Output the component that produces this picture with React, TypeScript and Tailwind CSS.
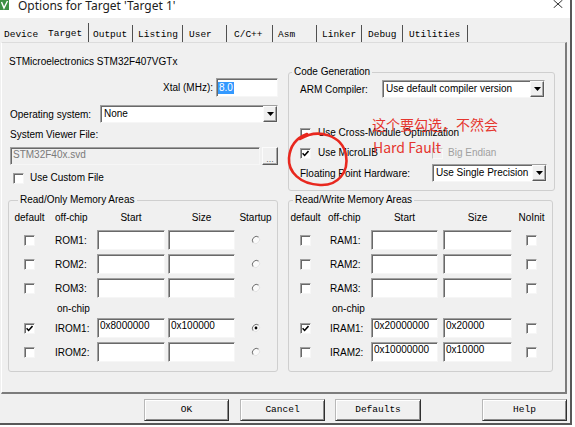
import React from "react";

const sunken =
  "border border-t-[#a0a0a0] border-l-[#a0a0a0] border-b-[#f6f6f6] border-r-[#f6f6f6] shadow-[inset_1px_1px_0_#696969]";
const raised =
  "border border-t-[#fbfbfb] border-l-[#fbfbfb] border-b-[#5a5a5a] border-r-[#5a5a5a] shadow-[inset_-1px_-1px_0_#a8a8a8]";
const btnRaised =
  "border border-t-[#b8b8b8] border-l-[#b8b8b8] border-b-[#303030] border-r-[#303030] shadow-[inset_1px_1px_0_#ffffff,inset_-1px_-1px_0_#8c8c8c]";

function Cb({ checked = false, disabled = false }: { checked?: boolean; disabled?: boolean }) {
  return (
    <span
      className={`w-[11px] h-[11px] shrink-0 flex items-center justify-center ${
        disabled
          ? "bg-[#f0f0f0] border border-t-[#c4c4c4] border-l-[#c4c4c4] border-b-[#f8f8f8] border-r-[#f8f8f8]"
          : "bg-white " + sunken
      }`}
    >
      {checked && (
        <svg width="7" height="7" viewBox="0 0 7 7">
          <path d="M0.6 3.3 L2.6 5.4 L6.5 1.1" fill="none" stroke="#000" strokeWidth="1.5" />
        </svg>
      )}
    </span>
  );
}

function Radio({ checked = false }: { checked?: boolean }) {
  return (
    <svg width="10" height="10" viewBox="0 0 10 10">
      <circle cx="5" cy="5" r="4" fill="#fafafa" />
      <path d="M7.8 2.2 A4 4 0 0 0 2.2 7.8" fill="none" stroke="#6e6e6e" strokeWidth="1" />
      <path d="M2.2 7.8 A4 4 0 0 0 7.8 2.2" fill="none" stroke="#e2e2e2" strokeWidth="1" />
      {checked && <circle cx="5" cy="5" r="1.4" fill="#000" />}
    </svg>
  );
}

function Select({ cls, text }: { cls: string; text: string }) {
  return (
    <div className={`${cls} h-[18px] flex bg-white ${sunken}`}>
      <span className="flex-1 pl-[3px] leading-[15px] whitespace-nowrap overflow-hidden">{text}</span>
      <span className={`w-[14px] h-full bg-[#f0f0f0] flex items-center justify-center ${raised}`}>
        <svg width="7" height="4" viewBox="0 0 7 4">
          <path d="M0 0 H7 L3.5 4 Z" fill="#000" />
        </svg>
      </span>
    </div>
  );
}

function Field({ cls, text }: { cls: string; text?: string }) {
  return (
    <div className={`${cls} h-[20px] bg-white ${sunken} pl-[2px] pt-[1px] leading-[12px] whitespace-nowrap`}>
      {text}
    </div>
  );
}

type Row = { label: string; start?: string; size?: string; def?: boolean; last?: boolean };

function MemArea(p: {
  title: string;
  boxCls: string;
  legendCls: string;
  c1: string;
  c2: string;
  c3: string;
  g: string;
  c4: string;
  c5: string;
  labPl: string;
  headPl: string;
  onPl: string;
  lastHead: string;
  radio: boolean;
  rows: Row[];
  onchip: Row[];
}) {
  const renderRow = (r: Row) => (
    <div key={r.label} className="h-[24px] flex items-center">
      <div className={`${p.c1} shrink-0 flex justify-center`}>
        <Cb checked={r.def} />
      </div>
      <div className={`${p.c2} shrink-0 ${p.labPl} whitespace-nowrap`}>{r.label}</div>
      <Field cls={`${p.c3} shrink-0`} text={r.start} />
      <div className={`${p.g} shrink-0`} />
      <Field cls={`${p.c4} shrink-0`} text={r.size} />
      <div className={`${p.c5} shrink-0 flex justify-center`}>
        {p.radio ? <Radio checked={r.last} /> : <Cb checked={r.last} />}
      </div>
    </div>
  );
  return (
    <fieldset className={`${p.boxCls} h-[178px] border border-[#cfcfcf] rounded-[3px]`}>
      <legend className={`${p.legendCls} px-[2px] leading-[12px]`}>{p.title}</legend>
      <div className="mt-[6px] h-[12px] flex leading-[12px] whitespace-nowrap">
        <div className={`${p.c1} shrink-0 text-center`}>default</div>
        <div className={`${p.c2} shrink-0 ${p.headPl}`}>off-chip</div>
        <div className={`${p.c3} shrink-0 text-center`}>Start</div>
        <div className={`${p.g} shrink-0`} />
        <div className={`${p.c4} shrink-0 text-center`}>Size</div>
        <div className={`${p.c5} shrink-0 text-center`}>{p.lastHead}</div>
      </div>
      <div className="mt-[4px] flex flex-col">
        {p.rows.map(renderRow)}
        <div className="h-[16px] flex items-center">
          <div className={`${p.c1} shrink-0`} />
          <div className={`${p.onPl} whitespace-nowrap`}>on-chip</div>
        </div>
        {p.onchip.map(renderRow)}
      </div>
    </fieldset>
  );
}

const tabs: { t: string; cls: string }[] = [
  { t: "Device", cls: "w-[43px] h-[17px] pl-[2px] pt-[4px]" },
  { t: "Target", cls: "w-[44px] h-[19px] pl-[3px] pt-[5px] border-r border-r-[#505050]" },
  { t: "Output", cls: "w-[44px] h-[17px] pl-[4px] pt-[4px] border-r border-r-[#505050]" },
  { t: "Listing", cls: "w-[50px] h-[17px] pl-[5px] pt-[4px] border-r border-r-[#505050]" },
  { t: "User", cls: "w-[44px] h-[17px] pl-[6px] pt-[4px] border-r border-r-[#505050]" },
  { t: "C/C++", cls: "w-[46px] h-[17px] pl-[7px] pt-[4px] border-r border-r-[#505050]" },
  { t: "Asm", cls: "w-[44px] h-[17px] pl-[5px] pt-[4px] border-r border-r-[#505050]" },
  { t: "Linker", cls: "w-[45px] h-[17px] pl-[5px] pt-[4px] border-r border-r-[#505050]" },
  { t: "Debug", cls: "w-[41px] h-[17px] pl-[6px] pt-[4px] border-r border-r-[#505050]" },
  { t: "Utilities", cls: "w-[65px] h-[17px] pl-[6px] pt-[4px] border-r border-r-[#505050]" },
];

export default function App() {
  return (
    <div className="relative w-[575px] h-[427px] bg-white overflow-hidden font-['Liberation_Sans',Arial,sans-serif] text-[10px] text-black">
      <div className="w-[572px] h-[425px] bg-[#f0f0f0] border-r-2 border-b-2 border-[#585858] flex flex-col">
        {/* title bar */}
        <div className="h-[18px] shrink-0 bg-white flex items-start">
          <svg width="9" height="10" viewBox="0 0 9 10" className="shrink-0">
            <rect x="0" y="0" width="9" height="10" fill="#3d8f43" />
            <path d="M1.5 2 L4 8 L7.5 1" fill="none" stroke="#ffffff" strokeWidth="1.4" />
          </svg>
          <span className="ml-[9px] mt-[0px] font-['Noto_Sans',sans-serif] text-[12px] leading-[12px] text-[#1c1c1c] whitespace-nowrap">
            Options for Target 'Target 1'
          </span>
          <svg width="10" height="8" viewBox="0 0 10 8" className="ml-auto mr-[7px] shrink-0">
            <path d="M0.5 0 L9.5 8 M9.5 0 L0.5 8" stroke="#333" strokeWidth="1" />
          </svg>
        </div>

        {/* tabs */}
        <div className="h-[24px] shrink-0 flex items-end pl-[2px] font-['Liberation_Mono',monospace] text-[9.5px] leading-[12px] text-black">
          {tabs.map((t) => (
            <div key={t.t} className={`${t.cls} shrink-0 whitespace-nowrap`}>
              {t.t}
            </div>
          ))}
        </div>

        {/* panel */}
        <div className="ml-[1px] w-[566px] h-[352px] shrink-0 border-t border-l border-t-[#dcdcdc] border-l-[#ffffff] border-r-2 border-b-2 border-r-[#7c7c7c] border-b-[#7c7c7c] pt-[13px] pl-[6px] flex flex-col">
          <div className="h-[12px] leading-[12px] pl-[1px] whitespace-nowrap">STMicroelectronics STM32F407VGTx</div>

          <div className="h-[126px] flex gap-[10px]">
            {/* left column */}
            <div className="w-[270px] flex flex-col">
              <div className="mt-[10px] h-[19px] flex items-center">
                <span className="flex-1 text-right pr-[3px]">Xtal (MHz):</span>
                <div className={`w-[62px] h-[19px] bg-white ${sunken} pl-[1px] flex items-center`}>
                  <span className="bg-[#3399ff] text-white px-[1px] leading-[12px]">8.0</span>
                </div>
              </div>
              <div className="mt-[8px] h-[18px] flex items-center">
                <span className="w-[92px] pl-[2px] whitespace-nowrap">Operating system:</span>
                <Select cls="w-[178px]" text="None" />
              </div>
              <div className="mt-[6px] h-[12px] leading-[12px] pl-[2px]">System Viewer File:</div>
              <div className="mt-[6px] h-[18px] flex">
                <div className={`ml-[2px] w-[250px] h-[18px] bg-[#f0f0f0] ${sunken} pl-[2px] text-[#7a7a7a] leading-[14px]`}>
                  STM32F40x.svd
                </div>
                <div className={`ml-[2px] w-[16px] h-[18px] bg-[#f0f0f0] ${raised} flex items-end justify-center text-[#666] text-[9px] leading-[10px]`}>
                  ...
                </div>
              </div>
              <div className="mt-[7px] h-[12px] flex items-center">
                <span className="ml-[5px]">
                  <Cb />
                </span>
                <span className="ml-[6px] leading-[12px]">Use Custom File</span>
              </div>
            </div>

            {/* right column: code generation */}
            <fieldset className="w-[267px] h-[125px] mt-[-2px] border border-[#cfcfcf] rounded-[3px] flex flex-col">
              <legend className="ml-[3px] px-[2px] leading-[12px]">Code Generation</legend>
              <div className="mt-[2px] h-[18px] flex items-center">
                <span className="w-[93px] pl-[11px] whitespace-nowrap">ARM Compiler:</span>
                <Select cls="w-[163px]" text="Use default compiler version" />
              </div>
              <div className="mt-[29px] h-[12px] flex items-center pl-[11px]">
                <Cb />
                <span className="ml-[7px] leading-[12px] whitespace-nowrap">Use Cross-Module Optimization</span>
              </div>
              <div className="mt-[8px] h-[12px] flex items-center">
                <div className="w-[143px] pl-[11px] flex items-center">
                  <Cb checked />
                  <span className="ml-[7px] leading-[12px] whitespace-nowrap">Use MicroLIB</span>
                </div>
                <Cb disabled />
                <span className="ml-[5px] leading-[12px] text-[#a0a0a0] whitespace-nowrap">Big Endian</span>
              </div>
              <div className="mt-[5px] h-[18px] flex items-center">
                <span className="w-[143px] pl-[11px] whitespace-nowrap">Floating Point Hardware:</span>
                <Select cls="w-[115px]" text="Use Single Precision" />
              </div>
            </fieldset>
          </div>

          <div className="flex gap-[10px]">
            <MemArea
              title="Read/Only Memory Areas"
              boxCls="w-[270px]"
              legendCls="ml-[9px]"
              c1="w-[41px]"
              c2="w-[47px]"
              c3="w-[68px]"
              g="w-[3px]"
              c4="w-[67px]"
              c5="w-[41px]"
              labPl="pl-[5px]"
              headPl="pl-[5px]"
              onPl="pl-[7px]"
              lastHead="Startup"
              radio
              rows={[{ label: "ROM1:" }, { label: "ROM2:" }, { label: "ROM3:" }]}
              onchip={[
                { label: "IROM1:", start: "0x8000000", size: "0x100000", def: true, last: true },
                { label: "IROM2:" },
              ]}
            />
            <MemArea
              title="Read/Write Memory Areas"
              boxCls="w-[265px]"
              legendCls="ml-[4px]"
              c1="w-[33px]"
              c2="w-[49px]"
              c3="w-[67px]"
              g="w-[5px]"
              c4="w-[69px]"
              c5="w-[39px]"
              labPl="pl-[8px]"
              headPl="pl-[6px]"
              onPl="pl-[10px]"
              lastHead="NoInit"
              radio={false}
              rows={[{ label: "RAM1:" }, { label: "RAM2:" }, { label: "RAM3:" }]}
              onchip={[
                { label: "IRAM1:", start: "0x20000000", size: "0x20000", def: true },
                { label: "IRAM2:", start: "0x10000000", size: "0x10000" },
              ]}
            />
          </div>
        </div>

        {/* buttons */}
        <div className="flex pt-[5px] font-['Liberation_Mono',monospace] text-[9.5px] text-black">
          <div className={`ml-[144px] w-[85px] h-[22px] bg-[#f0f0f0] ${btnRaised} flex items-center justify-center`}>OK</div>
          <div className={`ml-[11px] w-[85px] h-[22px] bg-[#f0f0f0] ${btnRaised} flex items-center justify-center`}>Cancel</div>
          <div className={`ml-[10px] w-[86px] h-[22px] bg-[#f0f0f0] ${btnRaised} flex items-center justify-center`}>Defaults</div>
          <div className={`ml-[61px] w-[85px] h-[22px] bg-[#f0f0f0] ${btnRaised} flex items-center justify-center`}>Help</div>
        </div>
      </div>

      {/* red annotation overlay */}
      <div className="absolute left-[372px] top-[116px] font-['Noto_Sans_CJK_SC',sans-serif] text-[14px] leading-[16px] text-[#e5362f] whitespace-nowrap">
        这个要勾选，不然会
      </div>
      <div className="absolute left-[373px] top-[139px] font-['Noto_Sans_CJK_SC',sans-serif] text-[14px] leading-[16px] text-[#e5362f] whitespace-nowrap">
        Hard Fault
      </div>
      <svg className="absolute left-0 top-0 pointer-events-none" width="575" height="427" viewBox="0 0 575 427">
        <path
          d="M300 139 C318 128, 342 135, 346 155 C349 172, 338 186, 320 185 C300 184, 288 172, 289 158 C290 146, 296 138, 307 134"
          fill="none"
          stroke="#e8281f"
          strokeWidth="2.6"
          strokeLinecap="round"
        />
      </svg>
    </div>
  );
}
